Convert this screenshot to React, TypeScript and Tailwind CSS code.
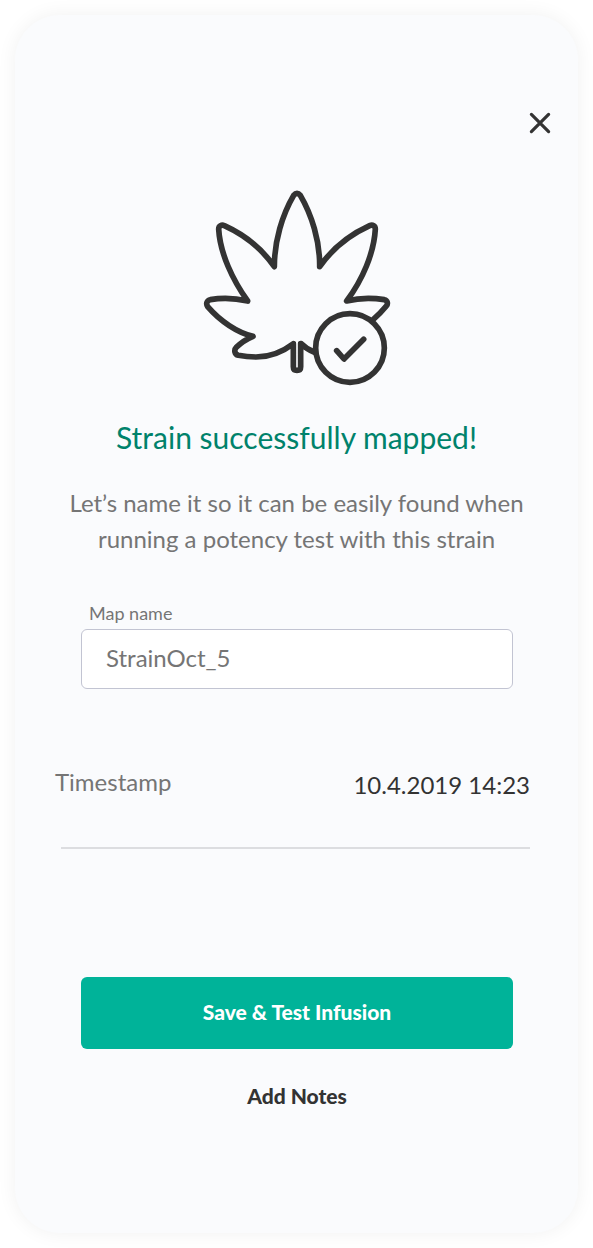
import { useState } from "react";

function CloseIcon() {
  return (
    <svg viewBox="0 0 24 24" className="size-6" fill="none" stroke="#333333" strokeWidth="3.2" strokeLinecap="round" aria-hidden="true">
      <path d="M3.4 3.4 L20.6 20.6 M20.6 3.4 L3.4 20.6" />
    </svg>
  );
}

function MappedLeafIcon() {
  return (
    <svg
      viewBox="0 0 609 645"
      className="mx-auto block h-[215px] w-[203px]"
      fill="none"
      stroke="#333333"
      strokeWidth="17"
      strokeLinecap="round"
      strokeLinejoin="round"
      aria-hidden="true"
    >
      <path d="M357 516 C344 511 330 502 319 491 L317 491 L317 560 Q317 571 306 571 Q295 571 295 560 L295 491 C262 516 226 531 183 531 C163 531 145 529 130 526 C119 523 116 510 124 502 C138 488 155 477 174 469 C127 458 76 424 38 380 C32 371 36 361 46 359 C81 353 123 355 158 363 C113 300 75 220 71 147 C71 138 80 133 88 137 C143 162 199 204 238 260 C238 183 262 104 296 46 Q306 34 316 46 C350 104 375 183 374 260 C413 204 469 162 524 137 C533 133 541 138 541 147 C537 220 502 300 455 363 C490 354 532 353 568 359 C577 361 580 371 574 378 C561 394 550 405 535 418" />
      <circle cx="465" cy="504" r="103" />
      <path d="M425 512 L447 537 L506 478" />
    </svg>
  );
}

export default function App() {
  const [name, setName] = useState("StrainOct_5");

  return (
    <div className="min-h-screen bg-white p-[15px] font-['Lato',sans-serif] text-[#333333]">
      <main className="mx-auto flex max-w-xl flex-col rounded-[45px] bg-[#fafbfd] pt-[88px] pb-[118px] shadow-[0_0_20px_rgba(0,0,0,0.06)]">
        <button type="button" aria-label="Close" className="mr-[18px] flex size-10 items-center justify-center self-end">
          <CloseIcon />
        </button>

        <div className="mt-[37px]">
          <MappedLeafIcon />
        </div>

        <h1 className="mt-[22px] text-center text-[30px] leading-10 text-[#00826b]">Strain successfully mapped!</h1>
        <p className="mt-7 px-12 text-center text-[24px] leading-9 text-[#757575]">
          Let’s name it so it can be easily found when running a potency test with this strain
        </p>

        <div className="mr-[65px] ml-[66px] mt-11 flex flex-col">
          <label htmlFor="map-name" className="px-2 text-[18px] leading-6 text-[#757575]">
            Map name
          </label>
          <input
            id="map-name"
            type="text"
            value={name}
            onChange={(event) => setName(event.target.value)}
            className="mt-1 h-[60px] w-full rounded-md border border-[#c2c4d2] bg-white px-6 pb-1 text-[24px] text-[#757575] outline-none"
          />
        </div>

        <dl className="mt-[75px] mr-12 ml-10 flex justify-between text-[24px] leading-9">
          <dt className="text-[#757575]">Timestamp</dt>
          <dd className="pt-[3px]">10.4.2019 14:23</dd>
        </dl>
        <hr className="mt-11 mr-12 ml-[46px] border-t-2 border-[#dcdde0]" />

        <div className="mr-[65px] ml-[66px] mt-32 flex flex-col">
          <button type="button" className="h-[72px] rounded-md bg-[#00b399] pb-0.5 text-[21px] font-black text-white">
            Save &amp; Test Infusion
          </button>
          <button type="button" className="mt-[30px] h-9 pb-0.5 text-[21px] font-black">
            Add Notes
          </button>
        </div>
      </main>
    </div>
  );
}
